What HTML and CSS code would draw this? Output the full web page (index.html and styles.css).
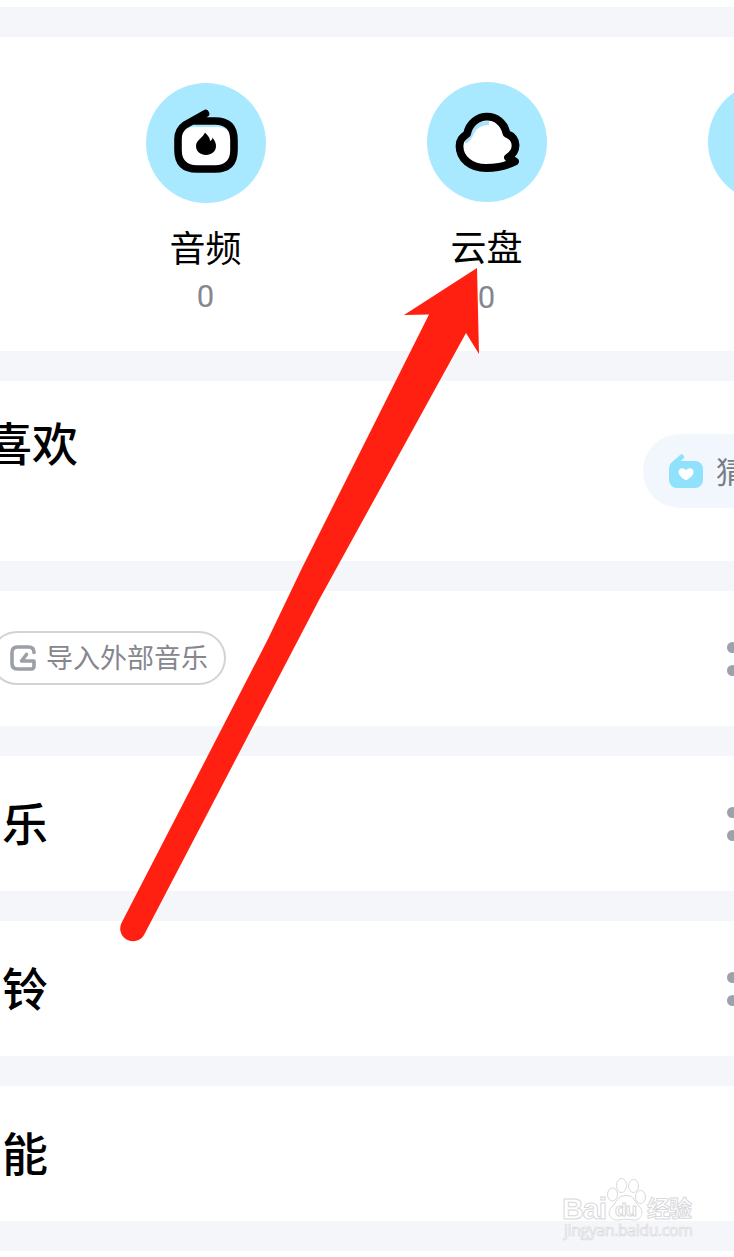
FILE: index.html
```html
<!DOCTYPE html>
<html lang="zh-CN">
<head>
  <meta charset="UTF-8" />
  <meta name="viewport" content="width=device-width, initial-scale=1" />
  <title>我的音乐</title>
  <link rel="stylesheet" href="styles.css">
</head>
<body>

<main class="page">
  <section class="shortcuts">
    <div class="shortcut audio">
      <svg class="circle" viewBox="0 0 120 120">
        <rect x="34" y="41" width="52" height="44" rx="15" fill="#fff"/>
        <path d="M38 43 Q42 40 48 40 H72 Q79 40 83 44" fill="none" stroke="#a9e9ff" stroke-width="8"/>
        <path d="M59.500 30.500 L39 42 Q32 47 32 56 V67 Q32 86 51 86 H69 Q88 86 88 67 V57 Q88 38 69 38 H49" fill="none" stroke="#000" stroke-width="7.6" stroke-linecap="round" stroke-linejoin="round"/>
        <path d="M59 49.5 C61 52 64 54 64 58 C66 57 66.500 56 66.500 54.500 C69 58 70 60 70 63 C70 68.500 65.500 72 60 72 C54.500 72 50 68.500 50 63 C50 57 56.500 55.500 59 49.500 Z"/>
      </svg>
      <div class="name">音频</div>
      <div class="count">0</div>
    </div>
    <div class="shortcut cloud">
      <svg class="circle" viewBox="0 0 120 120">
        <path d="M41 52 C43 29 77 29 79.500 51 C92 56 91 69 81 75 L88 80 C55 90 32.500 84 32.500 65 C32.500 58 37 56 41 52 Z" fill="#fff"/>
        <path d="M38 60 C43 57 43 55 45 51 C48 44 53 41 62 41" fill="none" stroke="#a9e0fb" stroke-width="4"/>
        <path d="M81 75.500 L88 79.500 C79 84 70 86 59 86 C44 86 32.500 77 32.500 64 C32.500 57 36 55 40 52 C45 29 75 29 79.500 51.500 C91 56 91.500 69 81 75.500 Z" fill="none" stroke="#000" stroke-width="7.8" stroke-linejoin="round"/>
      </svg>
      <div class="name">云盘</div>
      <div class="count">0</div>
    </div>
    <div class="shortcut cloud">
      <div class="circle"></div>
    </div>
  </section>

  <section class="favorite">
    <h2>喜欢</h2>
    <button class="guess">
      <svg width="34" height="34" viewBox="0 0 34 34">
        <path d="M12.500 3 L3.500 11" stroke="#8fe1fc" stroke-width="5" stroke-linecap="round"/>
        <rect y="7" width="34" height="27" rx="8" fill="#8fe1fc"/>
        <path d="M17 26.500 C12 23.500 9.500 21 9.500 18 C9.500 14 15 13 17 16.500 C19 13 24.500 14 24.500 18 C24.500 21 22 23.500 17 26.500 Z" fill="#fff"/>
      </svg>
      <span>猜你喜欢</span>
    </button>
  </section>

  <section class="row">
    <button class="import">
      <svg width="26" height="26" viewBox="0 0 26 26" fill="none" stroke="#9a9fa8" stroke-width="3.600" stroke-linecap="round" stroke-linejoin="round">
        <path d="M24 7.500 Q24 2 18.500 2 H7.500 Q2 2 2 7.500 V18.500 Q2 24 7.500 24 H21 Q24 24 24 21 V16 H11.500 L16.500 9.500"/>
      </svg>
      <span>导入外部音乐</span>
    </button>
    <div class="more"><i></i><i></i></div>
  </section>

  <section class="row">
    <h2>乐</h2>
    <div class="more"><i></i><i></i></div>
  </section>

  <section class="row">
    <h2>铃</h2>
    <div class="more"><i></i><i></i></div>
  </section>

  <section class="row">
    <h2>能</h2>
  </section>
</main>

<svg class="arrow" viewBox="0 0 734 1257">
  <path d="M477 268 L404 315 L429 314.500 L302 568 L268 639 L122 922 A12.300 12.300 0 0 0 144 935 L319 600 L466 333 L479 354 Z" fill="#ff2011"/>
</svg>

<svg class="watermark" viewBox="0 0 140 66">
  <g fill="#fff" stroke="#d9d9dc" stroke-width="1">
    <text class="brand" x="5" y="43" font-size="30" textLength="45">Bai</text>
    <ellipse cx="55.500" cy="18.500" rx="5" ry="6.500"/>
    <ellipse cx="64.500" cy="9.500" rx="5" ry="7"/>
    <ellipse cx="76.500" cy="10" rx="5" ry="6.500"/>
    <ellipse cx="83.500" cy="21" rx="5" ry="6.500"/>
    <path d="M69 19.500 C78 19.500 77 26 82 30 C88 36 84 45 76 44 C71 43 67 43 62 44 C53 45 49 37 55 31 C60 26 60 19.500 69 19.500 Z"/>
    <text class="brand" x="58" y="40" font-size="19" textLength="22">du</text>
    <text class="brand" x="90" y="41" font-size="23" textLength="45">经验</text>
    <text class="site" x="7" y="60" font-size="16" textLength="129">jingyan.baidu.com</text>
  </g>
</svg>

</body>
</html>
```

FILE: styles.css
```css
body {
  margin: 0;
  background-color: #fff;
  font-family: "Noto Sans CJK SC", sans-serif;
  color: #000;
  overflow: hidden;
}

.page {
  display: flex;
  flex-direction: column;
  gap: 30px;
  margin-top: 7px;
  padding: 30px 0;
  background-color: #f4f6fa;
}

section {
  box-sizing: border-box;
  background-color: #fff;
  overflow: hidden;
}

h2 {
  margin: 0;
  font-size: 46px;
  font-weight: 500;
  line-height: 60px;
}

button {
  box-sizing: border-box;
  flex-shrink: 0;
  display: flex;
  align-items: center;
  padding: 0;
  font-family: inherit;
  white-space: nowrap;
}

.shortcuts {
  display: grid;
  grid-template-columns: repeat(3, 281px);
  height: 314px;
  padding: 45px 0 0 65px;
}

.shortcut {
  display: flex;
  flex-direction: column;
  align-items: center;
}

.audio {
  padding-top: 1px;
}

.circle {
  width: 120px;
  height: 120px;
  border-radius: 50%;
  background-color: #a9e9ff;
}

.name {
  margin-top: 17px;
  font-size: 36px;
  line-height: 52px;
}

.count {
  margin-top: 9px;
  font-family: Roboto, sans-serif;
  font-size: 31px;
  line-height: 36px;
  color: #85868e;
}

.audio .count {
  margin-top: 7px;
}

.favorite {
  display: flex;
  justify-content: space-between;
  height: 180px;
}

.favorite h2 {
  margin: 30px 0 0 -14px;
}

.guess {
  width: 200px;
  height: 74px;
  margin: 53px -109px 0 0;
  padding-left: 26px;
  gap: 13px;
  border: none;
  border-radius: 37px;
  background-color: #f2f6fd;
  font-size: 30px;
  color: #777c86;
}

.guess span {
  padding-bottom: 2px;
}

.row {
  display: flex;
  align-items: center;
  justify-content: space-between;
  height: 135px;
}

.row h2 {
  margin-left: 2px;
  padding-bottom: 6px;
}

.import {
  width: 236px;
  height: 54px;
  margin: 0 0 2px -10px;
  padding-left: 18px;
  gap: 10px;
  border: 2px solid #d2d3d5;
  border-radius: 27px;
  background-color: #fff;
  font-size: 27px;
  color: #85868e;
}

.import span {
  padding-bottom: 2px;
}

.more {
  display: flex;
  flex-direction: column;
  gap: 12px;
  margin-right: -4px;
}

.more i {
  width: 11px;
  height: 11px;
  border-radius: 50%;
  background-color: #9da1aa;
}

.arrow {
  position: absolute;
  top: 0;
  left: 0;
  width: 734px;
  height: 1257px;
}

.watermark {
  position: absolute;
  top: 1176px;
  left: 557px;
  width: 140px;
  height: 66px;
}

.brand {
  font-family: "Liberation Sans", "Noto Sans CJK SC", sans-serif;
  font-weight: bold;
}

.site {
  font-family: "Open Sans", sans-serif;
  stroke-width: 0.7px;
}
```
